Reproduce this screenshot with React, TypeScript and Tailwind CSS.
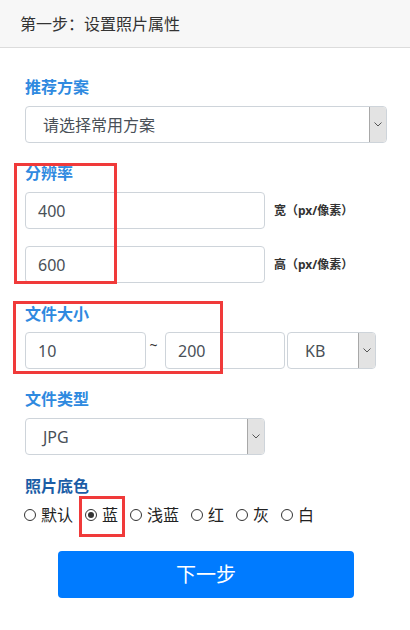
import React from 'react';

const font = { fontFamily: '"Noto Sans", "Noto Sans CJK SC", sans-serif' };

const Label = ({ children, dark }: { children: React.ReactNode; dark?: boolean }) => (
  <div
    className={`h-[24px] leading-[24px] text-[16px] font-bold ${dark ? 'text-[#1b5da6]' : 'text-[#2f8ae0]'}`}
  >
    {children}
  </div>
);

const Arrow = () => (
  <div className="w-[17px] h-full bg-[#e3e3e3] border-l border-[#a8a8a8] flex items-center justify-center">
    <svg width="8" height="5" viewBox="0 0 8 5">
      <path d="M0.5 0.5 L4 4 L7.5 0.5" fill="none" stroke="#555" strokeWidth="1" />
    </svg>
  </div>
);

const Select = ({ value, className }: { value: string; className: string }) => (
  <div
    className={`h-[37px] border border-[#ced4da] rounded-[4px] flex items-stretch overflow-hidden bg-white ${className}`}
  >
    <div className="flex-1 pl-[17px] flex items-center text-[16px] text-[#495057]">{value}</div>
    <Arrow />
  </div>
);

const Input = ({ value, className }: { value: string; className: string }) => (
  <div
    className={`h-[37px] border border-[#ced4da] rounded-[4px] pl-[12px] flex items-center text-[16px] text-[#495057] bg-white ${className}`}
  >
    {value}
  </div>
);

const Radio = ({ label, checked }: { label: string; checked?: boolean }) => (
  <div className="flex items-center gap-[5px]">
    <span className="w-[12px] h-[12px] rounded-full border border-[#333] flex items-center justify-center">
      {checked && <span className="w-[6px] h-[6px] rounded-full bg-[#333]" />}
    </span>
    <span className="text-[16px] text-[#222]">{label}</span>
  </div>
);

export default function App() {
  return (
    <div className="relative w-[410px] h-[630px] bg-white overflow-hidden" style={font}>
      {/* header */}
      <div className="h-[48px] bg-[#f7f7f7] border-b border-[#dcdcdc] px-[20px] flex items-center text-[16px] text-[#333]">
        第一步：设置照片属性
      </div>

      <div className="px-[25px] pt-[27px]">
        <Label>推荐方案</Label>
        <Select value="请选择常用方案" className="mt-[7px] w-[362px]" />

        <div className="mt-[18px]">
          <Label>分辨率</Label>
        </div>
        <div className="mt-[7px] flex items-center gap-[9px]">
          <Input value="400" className="w-[240px]" />
          <span className="text-[12px] font-bold text-[#333]">宽（px/像素）</span>
        </div>
        <div className="mt-[17px] flex items-center gap-[9px]">
          <Input value="600" className="w-[240px]" />
          <span className="text-[12px] font-bold text-[#333]">高（px/像素）</span>
        </div>

        <div className="mt-[19px]">
          <Label>文件大小</Label>
        </div>
        <div className="mt-[6px] flex items-center">
          <Input value="10" className="w-[121px]" />
          <span className="w-[19px] pr-[4px] text-center text-[14px] text-[#333] -mt-[12px]">~</span>
          <Input value="200" className="w-[120px]" />
          <Select value="KB" className="ml-[2px] w-[89px]" />
        </div>

        <div className="mt-[18px]">
          <Label>文件类型</Label>
        </div>
        <Select value="JPG" className="mt-[7px] w-[240px]" />

        <div className="mt-[19px]">
          <Label dark>照片底色</Label>
        </div>
        <div className="mt-[5px] flex items-center gap-[12px] -ml-[1px]">
          <Radio label="默认" />
          <Radio label="蓝" checked />
          <Radio label="浅蓝" />
          <Radio label="红" />
          <Radio label="灰" />
          <Radio label="白" />
        </div>

        <div className="mt-[24px] pl-[33px]">
          <button className="w-[296px] h-[47px] rounded-[4px] bg-[#007bff] text-white text-[20px]">
            下一步
          </button>
        </div>
      </div>

      {/* annotation boxes */}
      <div className="absolute left-[14px] top-[163px] w-[103px] h-[121px] border-[3px] border-[#f03a3a]" />
      <div className="absolute left-[13px] top-[301px] w-[210px] h-[73px] border-[3px] border-[#f03a3a]" />
      <div className="absolute left-[79px] top-[496px] w-[46px] h-[41px] border-[3px] border-[#f03a3a]" />
    </div>
  );
}
